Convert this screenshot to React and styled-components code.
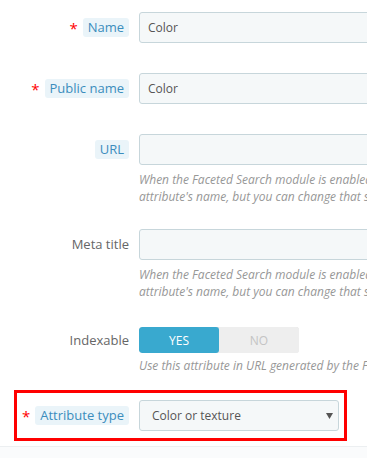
import React from "react";
import styled, { createGlobalStyle } from "styled-components";

const GlobalStyle = createGlobalStyle`
  html, body { margin: 0; padding: 0; background: #ffffff; }
  body { font-family: "Open Sans", "Noto Sans", sans-serif; overflow: hidden; }
  * { box-sizing: border-box; }
`;

const Page = styled.div`
  width: 367px;
  height: 458px;
  overflow: hidden;
  display: flex;
  flex-direction: column;
`;

const Form = styled.div`
  padding-top: 12px;
  display: flex;
  flex-direction: column;
`;

const Group = styled.div`
  display: flex;
  column-gap: 10px;
  margin-bottom: ${(p) => p.$mb}px;
`;

const LabelCol = styled.div`
  flex: none;
  width: ${(p) => p.$w || 129}px;
  height: ${(p) => p.$h || 31}px;
  display: flex;
  justify-content: flex-end;
  align-items: center;
`;

const Asterisk = styled.span`
  color: #ff0000;
  font-size: 15px;
  line-height: 1;
  margin-right: 5px;
  align-self: center;
  transform: translateY(1px);
`;

const Tip = styled.span`
  display: inline-block;
  background: #eaf4f9;
  color: #3b8dbd;
  font-size: 13px;
  line-height: 17px;
  padding: 1px 5px;
  border-radius: 3px;
  white-space: nowrap;
`;

const Plain = styled.span`
  color: #666666;
  font-size: 13px;
  line-height: 17px;
  white-space: nowrap;
`;

const Control = styled.div`
  flex: none;
  width: ${(p) => p.$w || 280}px;
  display: flex;
  flex-direction: column;
`;

const Input = styled.div`
  height: 31px;
  width: 100%;
  border: 1px solid #c7d6db;
  background: #f5f8f9;
  border-radius: 3px;
  padding: 0 8px;
  display: flex;
  align-items: center;
  font-size: 12px;
  color: #555555;
`;

const Help = styled.div`
  margin-top: ${(p) => p.$mt ?? 6}px;
  font-size: 12px;
  font-style: italic;
  line-height: 17px;
  color: #979797;
  white-space: nowrap;
`;

const Switch = styled.div`
  width: 160px;
  height: 26px;
  display: grid;
  grid-template-columns: 80px 80px;
  border-radius: 3px;
  overflow: hidden;
  background: #eeeeee;
  box-shadow: inset 0 1px 2px rgba(0, 0, 0, 0.08);
`;

const SwitchOption = styled.div`
  display: flex;
  align-items: center;
  justify-content: center;
  font-size: 12px;
  background: ${(p) => (p.$active ? "#39a9cf" : "#eeeeee")};
  color: ${(p) => (p.$active ? "#ffffff" : "#c4c4c4")};
  border-radius: ${(p) => (p.$active ? "3px" : "0")};
`;

const Highlight = styled.div`
  margin-left: 14px;
  width: 333px;
  border: 3px solid #ff0000;
  padding: 7px 5px 7px 0;
  display: flex;
  column-gap: 10px;
`;

const Select = styled.div`
  width: 200px;
  height: 31px;
  border: 1px solid #c7d6db;
  background: #f5f8f9;
  border-radius: 3px;
  padding: 0 5px 0 12px;
  display: flex;
  align-items: center;
  justify-content: space-between;
  font-size: 12px;
  color: #555555;
`;

const Footer = styled.div`
  margin-top: 5px;
  flex: 1;
  border-top: 1px solid #eceff1;
  background: #fafbfc;
`;

const Caret = () => (
  <svg width="7" height="6" viewBox="0 0 7 6">
    <path d="M0 0 H7 L3.5 6 Z" fill="#555555" />
  </svg>
);

const helpFaceted = (
  <>
    When the Faceted Search module is enabled, you can get more detailed URLs by choosing the word that best represent this
    <br />
    attribute's name, but you can change that setting using this field.
  </>
);

export default function App() {
  return (
    <Page>
      <GlobalStyle />
      <Form>
        <Group $mb={30}>
          <LabelCol>
            <Asterisk>*</Asterisk>
            <Tip>Name</Tip>
          </LabelCol>
          <Control>
            <Input>Color</Input>
          </Control>
        </Group>
        <Group $mb={30}>
          <LabelCol>
            <Asterisk>*</Asterisk>
            <Tip>Public name</Tip>
          </LabelCol>
          <Control>
            <Input>Color</Input>
          </Control>
        </Group>
        <Group $mb={24}>
          <LabelCol>
            <Tip>URL</Tip>
          </LabelCol>
          <Control>
            <Input />
            <Help>{helpFaceted}</Help>
          </Control>
        </Group>
        <Group $mb={27}>
          <LabelCol>
            <Plain>Meta title</Plain>
          </LabelCol>
          <Control>
            <Input />
            <Help>{helpFaceted}</Help>
          </Control>
        </Group>
        <Group $mb={16}>
          <LabelCol $h={26}>
            <Plain>Indexable</Plain>
          </LabelCol>
          <Control>
            <Switch>
              <SwitchOption $active>YES</SwitchOption>
              <SwitchOption>NO</SwitchOption>
            </Switch>
            <Help $mt={4}>Use this attribute in URL generated by the Faceted Search module.</Help>
          </Control>
        </Group>
        <Highlight>
          <LabelCol $w={112}>
            <Asterisk>*</Asterisk>
            <Tip>Attribute type</Tip>
          </LabelCol>
          <Select>
            <span>Color or texture</span>
            <Caret />
          </Select>
        </Highlight>
      </Form>
      <Footer />
    </Page>
  );
}
